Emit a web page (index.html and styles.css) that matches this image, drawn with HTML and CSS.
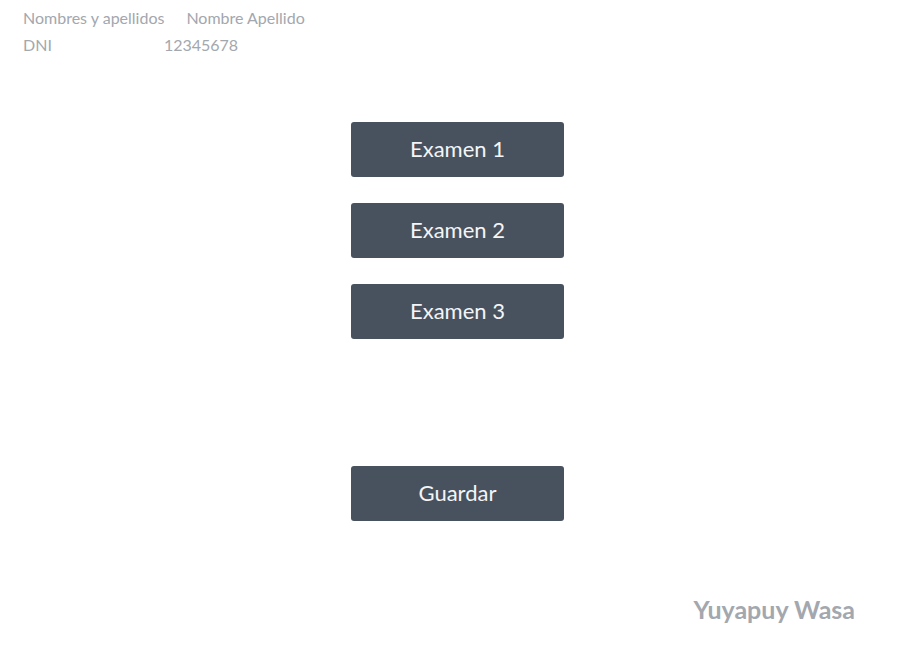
FILE: index.html
```html
<!DOCTYPE html>
<html lang="es">
<head>
<meta charset="utf-8">
<meta name="viewport" content="width=device-width, initial-scale=1">
<title>Yuyapuy Wasa</title>
<link rel="stylesheet" href="styles.css">
</head>
<body>
<header>
  <dl class="person">
    <div class="row row-name"><dt>Nombres y apellidos</dt><dd>Nombre Apellido</dd></div>
    <div class="row row-id"><dt>DNI</dt><dd>12345678</dd></div>
  </dl>
</header>
<main>
  <div class="exams">
    <button type="button">Examen 1</button>
    <button type="button">Examen 2</button>
    <button type="button">Examen 3</button>
  </div>
  <button type="submit">Guardar</button>
</main>
<footer>Yuyapuy Wasa</footer>
</body>
</html>
```
FILE: styles.css
```css
* {
  box-sizing: border-box;
}

body {
  margin: 0;
  min-height: 100vh;
  display: flex;
  flex-direction: column;
  background: #fff;
  color: #a3a7ae;
  font-family: Lato, sans-serif;
}

header {
  padding: 4px 23px 0;
}

.person {
  margin: 0;
  font-size: 16px;
  line-height: 27px;
}

.row {
  display: flex;
}

.row dd {
  margin: 0;
}

.row-name {
  gap: 22px;
}

.row-id {
  gap: 112px;
}

main {
  display: flex;
  flex-direction: column;
  align-items: center;
  gap: 127px;
  padding: 64px 0 0 2px;
}

.exams {
  display: flex;
  flex-direction: column;
  gap: 26px;
}

button {
  width: 213px;
  height: 55px;
  padding: 0 0 2px;
  border: 0;
  border-radius: 3px;
  background: #48525e;
  color: #f4f5f6;
  font: 22px/28px Lato, sans-serif;
}

footer {
  margin-top: auto;
  padding: 0 58px 38px;
  font-size: 25px;
  line-height: 32px;
  font-weight: 700;
  text-align: right;
}
```
